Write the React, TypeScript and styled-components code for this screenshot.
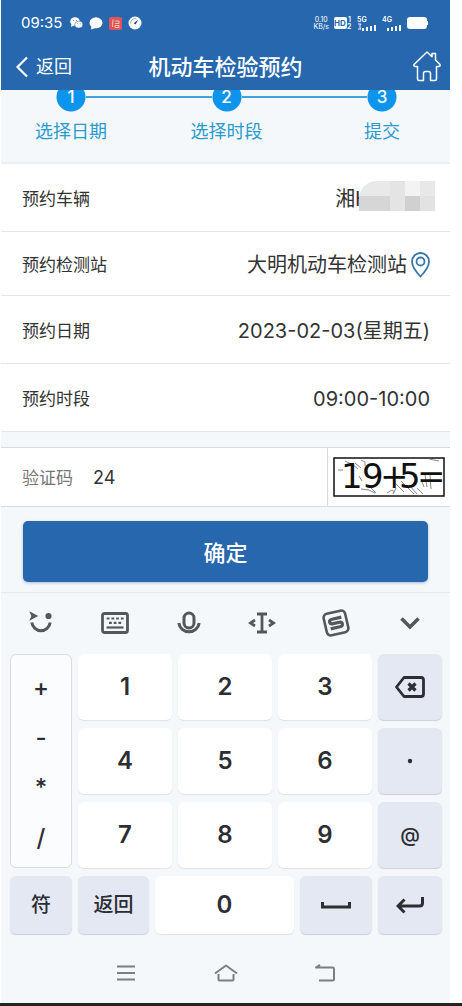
import React from 'react';
import styled, { createGlobalStyle } from 'styled-components';

const BLUE = '#2667ae';
const STEP = '#0d95ee';
const KEY_INK = '#2c2e33';

const GlobalStyle = createGlobalStyle`
  * { box-sizing: border-box; }
  body {
    margin: 0;
    background: #fff;
    font-family: Inter, "Noto Sans CJK SC", sans-serif;
    color: #333;
  }
  button, input { font: inherit; color: inherit; }
  button { border: 0; padding: 0; background: none; cursor: pointer; }
  svg { display: block; flex: none; }
`;

const Page = styled.div`
  padding: 0 12px 0 1px;
`;

const Phone = styled.div`
  background: #f5f8fa;
`;

const StatusBar = styled.div`
  height: 44px;
  padding: 2px 22px 0 20px;
  display: flex;
  align-items: center;
  justify-content: space-between;
  background: ${BLUE};
  color: #fff;
`;

const StatusGroup = styled.div<{ $gap: number }>`
  display: flex;
  align-items: center;
  gap: ${(p) => p.$gap}px;
`;

const Clock = styled.span`
  font-size: 15px;
  line-height: 20px;
  margin-right: 2px;
`;

const Speed = styled.span`
  font-size: 7px;
  line-height: 7px;
  text-align: center;
`;

const Header = styled.header`
  height: 46px;
  padding: 0 9px;
  display: grid;
  grid-template-columns: 1fr auto 1fr;
  align-items: center;
  background: ${BLUE};
  color: #fff;
`;

const BackButton = styled.button`
  justify-self: start;
  padding-left: 5px;
  display: flex;
  align-items: center;
  gap: 7px;
  font-size: 18px;
  line-height: 24px;
`;

const Title = styled.h1`
  margin: 0;
  font-size: 22px;
  line-height: 32px;
  font-weight: 500;
`;

const HomeLink = styled.a`
  justify-self: end;
  color: #fff;
`;

const StepsPanel = styled.nav`
  height: 74px;
  border-bottom: 2px solid #eceff1;
`;

const StepList = styled.ol`
  list-style: none;
  margin: 0;
  padding: 0 32px 0 34px;
  display: flex;
`;

const Step = styled.li`
  width: 72px;
  display: flex;
  flex-direction: column;
  align-items: center;
  gap: 7px;
  font-size: 18px;
  line-height: 26px;
  color: #2a9bcf;
`;

const StepNumber = styled.span`
  width: 30px;
  height: 22px;
  background: radial-gradient(circle at 50% 7px, ${STEP} 14px, transparent 15px);
  color: #fff;
  font-size: 17px;
  line-height: 14px;
  font-weight: 500;
  text-align: center;
`;

const Connector = styled.li`
  flex: 1;
  height: 2px;
  margin: 6px -21px 0;
  background: #3fa3e0;
`;

const Details = styled.dl`
  margin: 0;
  background: #fff;
`;

const DetailRow = styled.div<{ $compact?: boolean }>`
  height: ${(p) => (p.$compact ? 64 : 68)}px;
  padding: 2px 20px 0 21px;
  display: flex;
  align-items: center;
  justify-content: space-between;
  border-bottom: 1px solid #e4e5e7;
`;

const DetailName = styled.dt`
  font-size: 17px;
  line-height: 24px;
`;

const DetailValue = styled.dd`
  margin: 0;
  display: flex;
  align-items: center;
  gap: 4px;
  font-size: 20px;
  line-height: 28px;
`;

const Plate = styled.span`
  display: flex;
  align-items: center;
  margin-right: -5px;
  svg { margin-left: -11px; margin-top: -6px; }
`;

const CodeRow = styled.div`
  height: 60px;
  margin-top: 15px;
  padding-left: 21px;
  display: flex;
  align-items: center;
  background: #fff;
  border-top: 1px solid #d9dcde;
  border-bottom: 1px solid #d9dcde;
`;

const CodeLabel = styled.label`
  padding-top: 2px;
  font-size: 17px;
  line-height: 24px;
  color: #777;
`;

const CodeInput = styled.input`
  flex: 1;
  min-width: 0;
  margin-left: 20px;
  padding: 2px 0 0;
  border: 0;
  outline: 0;
  background: none;
  font-size: 18px;
  line-height: 24px;
`;

const CaptchaButton = styled.button`
  align-self: stretch;
  padding: 0 5px;
  border-left: 1px solid #d9dcde;
`;

const SubmitArea = styled.div`
  padding: 14px 22px 10px;
`;

const SubmitButton = styled.button`
  width: 100%;
  height: 61px;
  padding-top: 2px;
  border-radius: 5px;
  background: ${BLUE};
  box-shadow: 0 1px 3px rgba(38, 103, 174, 0.4);
  color: #fff;
  font-size: 22px;
  line-height: 32px;
  font-weight: 500;
`;

const Keyboard = styled.section`
  border-top: 1px solid #e6ebee;
`;

const Toolbar = styled.div`
  height: 61px;
  padding: 0 3px 2px;
  display: flex;
  color: #54585c;
`;

const ToolButton = styled.button`
  flex: 1;
  display: flex;
  align-items: center;
  justify-content: center;
`;

const Keys = styled.div`
  padding: 0 8px 0 9px;
  display: grid;
  grid-template-columns: 62fr 94fr 94fr 94fr 64fr;
  grid-template-rows: repeat(3, 66px);
  gap: 8px 6px;
`;

const BottomKeys = styled.div`
  padding: 8px 8px 0 9px;
  display: grid;
  grid-template-columns: 62fr 71fr 139fr 72fr 64fr;
  grid-template-rows: 58px;
  gap: 6px;
`;

const Key = styled.button<{ $tint?: boolean; $small?: boolean }>`
  display: flex;
  align-items: center;
  justify-content: center;
  min-width: 0;
  border-radius: 6px;
  background: ${(p) => (p.$tint ? '#e4e8f3' : '#fff')};
  box-shadow: 0 1px 1px ${(p) => (p.$tint ? '#cbd0dc' : '#dfe2e6')};
  color: ${KEY_INK};
  font-size: ${(p) => (p.$small ? 20 : 24)}px;
  line-height: 28px;
  font-weight: ${(p) => (p.$small ? 500 : 600)};
`;

const SymbolColumn = styled.div`
  grid-row: 1 / 4;
  padding: 8px 0 4px;
  display: flex;
  flex-direction: column;
  border: 1px solid #d9dce1;
  border-radius: 6px;
  background: #fbfcfe;
`;

const SymbolKey = styled.button`
  flex: 1;
  color: ${KEY_INK};
  font-size: 24px;
  line-height: 28px;
  font-weight: 500;
`;

const SystemNav = styled.nav`
  height: 69px;
  padding: 8px 75px 0;
  display: flex;
  color: #7b7e82;
`;

const Ground = styled.footer`
  height: 4px;
  margin: 0 -12px 0 -1px;
  background: #26251f;
`;

const Bars = () => (
  <g fill="#fff">
    <rect x="5" y="14" width="2" height="3" />
    <rect x="9" y="13" width="2" height="4" />
    <rect x="13" y="12" width="2" height="5" />
    <rect x="17" y="11" width="2" height="6" />
  </g>
);

const SignalText = styled.text`
  font-size: 7px;
  font-weight: 600;
  fill: #fff;
`;

const HdText = styled.text`
  font-size: 8px;
  font-weight: 700;
`;

const CaptchaText = styled.text`
  font-family: "DejaVu Sans", sans-serif;
  font-size: 34px;
  fill: #111;
`;

const StatusIcons = () => (
  <>
    <svg width="13" height="12" viewBox="0 0 13 12" fill="#fff">
      <ellipse cx="5" cy="4.5" rx="4.8" ry="4.2" />
      <path d="M1.5 7 1 10l3-1.6z" />
      <ellipse cx="8.8" cy="7.6" rx="4" ry="3.5" stroke={BLUE} strokeWidth=".5" />
      <g fill={BLUE}>
        <circle cx="3.4" cy="3.4" r=".5" /><circle cx="6.4" cy="3.4" r=".5" />
        <circle cx="7.6" cy="6.7" r=".4" /><circle cx="10.2" cy="6.7" r=".4" />
      </g>
    </svg>
    <svg width="14" height="13" viewBox="0 0 14 13" fill="#fff">
      <ellipse cx="7" cy="5.8" rx="6.5" ry="5.5" />
      <path d="M2.5 9 2 12.6 6.5 11z" />
    </svg>
    <svg width="13" height="13" viewBox="0 0 13 13">
      <rect width="13" height="13" rx="2" fill="#e0525c" />
      <path d="M4 2.500 3.500 10M6 4h4v2.500H6M6 8.500h4v2H6z" fill="none" stroke="#ffc9a0" />
    </svg>
    <svg width="14" height="14" viewBox="0 0 14 14">
      <circle cx="7" cy="7" r="6.500" fill="#fff" />
      <path d="M2.800 7.500A4.200 4.200 0 0 1 8.500 3" fill="none" stroke="#6d8fb5" strokeWidth=".8" />
      <path d="M5.800 7.200 10.200 3.800 7.600 8.600z" fill="#1f3a5c" />
    </svg>
  </>
);

const PlateMask = () => (
  <svg width="76" height="30" viewBox="0 0 76 30" aria-hidden="true">
    <path d="M0 15Q3 2 16 0H31V15z" fill="#e9e9e9" />
    <path d="M31 0h15v15H31z" fill="#e4e4e4" />
    <path d="M46 0h15v15H46z" fill="#f3f3f3" />
    <path d="M61 0h15v15H61z" fill="#e8e8e8" />
    <path d="M0 15h31v15H0z" fill="#d6d6d6" />
    <path d="M31 15h15v15H31z" fill="#e4e4e4" />
    <path d="M46 15h15v15H46z" fill="#d0d0d0" />
    <path d="M61 15h15v15H61z" fill="#e2e2e2" />
  </svg>
);

const Captcha = () => (
  <svg width="112" height="40" viewBox="0 0 112 40" role="img" aria-label="19+5=">
    <rect x="1" y="1" width="110" height="38" fill="#fff" stroke="#111" strokeWidth="1.500" />
    <g fill="none" stroke="#888" strokeWidth="1">
      <path d="M5 13h5M12 4l8 4 5 4M28 3l4 2v4M22 6l6 5M26 19l3 5M28 32l8 1 6 3M38 31l5 5M52 22l5-3" />
      <path d="M54 36l5-3 3 2M62 26l9 9M68 24l9 9 4 4M76 28l8 9M84 31l6 6M92 18l2 12M96 2l10 2M88 22l3 8M97 18l1 14M60 37l3-6M80 20l4-3" />
    </g>
    <CaptchaText y="31" x="8 29 47 66 84">19+5=</CaptchaText>
  </svg>
);

const tools = [
  {
    name: '表情',
    icon: (
      <svg width="24" height="24" viewBox="0 0 24 24" fill="none" stroke="currentColor" strokeWidth="3">
        <path d="M2.800 11.500A9.300 9.600 0 0 0 21.200 11.500" />
        <path d="M1.500 1.500 8 5 1.500 8.500l1.500-3.500z" fill="currentColor" strokeWidth="1.200" />
        <circle cx="19.500" cy="5" r="3.100" fill="currentColor" stroke="none" />
      </svg>
    ),
  },
  {
    name: '键盘',
    icon: (
      <svg width="28" height="22" viewBox="0 0 28 22" fill="none" stroke="currentColor" strokeWidth="2.200">
        <rect x="1.500" y="1.500" width="25" height="19" rx="2" strokeWidth="2.800" />
        <path d="M5.700 6.500h17" strokeDasharray="2.800 1.900" />
        <path d="M8 10.800h13" strokeDasharray="2.800 1.900" />
        <path d="M5.500 15.500h17" />
      </svg>
    ),
  },
  {
    name: '语音',
    icon: (
      <svg width="24" height="24" viewBox="0 0 24 24" fill="none" stroke="currentColor" strokeWidth="3">
        <rect x="7" y="2" width="10" height="15" rx="5" />
        <path d="M1.800 12A10.300 10.200 0 0 0 22.200 12" />
      </svg>
    ),
  },
  {
    name: '光标',
    icon: (
      <svg width="28" height="22" viewBox="0 0 28 22" fill="none" stroke="currentColor" strokeWidth="2.800">
        <path d="M9 2h10M9 20h10M14 2v18M7 8 2.500 11 7 14M21 8l4.500 3L21 14" />
      </svg>
    ),
  },
  {
    name: '输入法',
    icon: (
      <svg width="28" height="28" viewBox="0 0 28 28" fill="none" stroke="currentColor" strokeWidth="2.600">
        <g transform="rotate(-13 14 14)">
          <rect x="3" y="3" width="22" height="22" rx="4" />
          <path d="M20.500 9.500H11Q8 9.500 8 11.700T11 14h6.500Q20 14 20 16.300T17 18.500H7.500" strokeWidth="3.200" />
        </g>
      </svg>
    ),
  },
  {
    name: '收起',
    icon: (
      <svg width="20" height="14" viewBox="0 0 20 14" fill="none" stroke="currentColor" strokeWidth="3.600">
        <path d="M1.500 2.500 10 11 18.500 2.500" />
      </svg>
    ),
  },
];

const BackspaceIcon = () => (
  <svg width="30" height="22" viewBox="0 0 30 22" fill="none" stroke="currentColor" strokeWidth="2.800" strokeLinejoin="round">
    <path d="M9 1.500H26Q28.500 1.500 28.500 4V18Q28.500 20.500 26 20.500H9L1.500 11z" />
    <path d="M13.500 7.500l7 7M20.500 7.500l-7 7" strokeWidth="3.200" />
  </svg>
);

const SpaceIcon = () => (
  <svg width="30" height="8" viewBox="0 0 30 8" fill="none" stroke="currentColor" strokeWidth="3">
    <path d="M1.500 1V6H28.500V1" />
  </svg>
);

const EnterIcon = () => (
  <svg width="28" height="18" viewBox="0 0 28 18" fill="none" stroke="currentColor" strokeWidth="3">
    <path d="M26.500 1V7Q26.500 10 23.500 10H2M8.500 3.500 2 10l6.500 6.500" />
  </svg>
);

const DotIcon = () => (
  <svg width="6" height="6" viewBox="0 0 6 6" fill="currentColor">
    <circle cx="3" cy="3" r="2.200" />
  </svg>
);

export default function App() {
  return (
    <Page>
      <GlobalStyle />
      <Phone>
        <StatusBar>
          <StatusGroup $gap={6}>
            <Clock>09:35</Clock>
            <StatusIcons />
          </StatusGroup>
          <StatusGroup $gap={5}>
            <Speed>0.10<br />KB/s</Speed>
            <svg width="18" height="14" viewBox="0 0 18 14">
              <rect y="1" width="13" height="12" rx="2" fill="#fff" />
              <HdText x="0" y="10" fill={BLUE}>HD</HdText>
              <SignalText x="14" y="6">1</SignalText>
              <SignalText x="13" y="13">2</SignalText>
            </svg>
            <svg width="20" height="18" viewBox="0 0 20 18">
              <SignalText x="0" y="8">5G</SignalText>
              <path d="M1 10h3l-1 1.500v2l1 1.500H1" fill="none" stroke="#fff" />
              <Bars />
            </svg>
            <svg width="20" height="18" viewBox="0 0 20 18">
              <SignalText x="0" y="8">4G</SignalText>
              <Bars />
            </svg>
            <svg width="21" height="12" viewBox="0 0 21 12" fill="#fff">
              <rect width="20" height="12" rx="3" />
              <rect x="20" y="4" width="1" height="4" />
            </svg>
          </StatusGroup>
        </StatusBar>

        <Header>
          <BackButton>
            <svg width="14" height="22" viewBox="0 0 14 22" fill="none" stroke="#fff" strokeWidth="2.200">
              <path d="M12 1.500 2.500 11 12 20.500" />
            </svg>
            返回
          </BackButton>
          <Title>机动车检验预约</Title>
          <HomeLink href="#home" aria-label="首页">
            <svg width="28" height="32" viewBox="0 0 28 32" fill="none" stroke="currentColor" strokeWidth="1.500" strokeLinejoin="round">
              <path d="M14 1 1 13.500Q.5 15.500 2.500 15.500H4.500V28Q4.500 29.500 6 29.500H10.500V22.500Q10.500 20.500 12.500 20.500h3Q17.500 20.500 17.500 22.500v7H22Q23.500 29.500 23.500 28V15.500H25.500Q27.500 15.500 27 13.500L22.500 9V2.500H19V5.800z" />
            </svg>
          </HomeLink>
        </Header>

        <StepsPanel>
          <StepList>
            <Step><StepNumber>1</StepNumber>选择日期</Step>
            <Connector aria-hidden="true" />
            <Step><StepNumber>2</StepNumber>选择时段</Step>
            <Connector aria-hidden="true" />
            <Step><StepNumber>3</StepNumber>提交</Step>
          </StepList>
        </StepsPanel>

        <Details>
          <DetailRow>
            <DetailName>预约车辆</DetailName>
            <DetailValue><Plate>湘H<PlateMask /></Plate></DetailValue>
          </DetailRow>
          <DetailRow $compact>
            <DetailName>预约检测站</DetailName>
            <DetailValue>
              大明机动车检测站
              <svg width="19" height="26" viewBox="0 0 19 26" fill="none" stroke="#3a78ab" strokeWidth="1.800">
                <path d="M9.500 24.500Q1 15.500 1 9.500A8.500 8.500 0 0 1 18 9.500Q18 15.500 9.500 24.500z" />
                <circle cx="9.500" cy="9.500" r="4" />
              </svg>
            </DetailValue>
          </DetailRow>
          <DetailRow>
            <DetailName>预约日期</DetailName>
            <DetailValue>2023-02-03(星期五)</DetailValue>
          </DetailRow>
          <DetailRow>
            <DetailName>预约时段</DetailName>
            <DetailValue>09:00-10:00</DetailValue>
          </DetailRow>
        </Details>

        <CodeRow>
          <CodeLabel htmlFor="code">验证码</CodeLabel>
          <CodeInput id="code" inputMode="numeric" defaultValue="24" />
          <CaptchaButton><Captcha /></CaptchaButton>
        </CodeRow>

        <SubmitArea>
          <SubmitButton>确定</SubmitButton>
        </SubmitArea>

        <Keyboard>
          <Toolbar>
            {tools.map((tool) => (
              <ToolButton key={tool.name} aria-label={tool.name}>{tool.icon}</ToolButton>
            ))}
          </Toolbar>
          <Keys>
            <SymbolColumn>
              {['+', '-', '*', '/'].map((s) => <SymbolKey key={s}>{s}</SymbolKey>)}
            </SymbolColumn>
            <Key>1</Key>
            <Key>2</Key>
            <Key>3</Key>
            <Key $tint aria-label="删除"><BackspaceIcon /></Key>
            <Key>4</Key>
            <Key>5</Key>
            <Key>6</Key>
            <Key $tint aria-label="点"><DotIcon /></Key>
            <Key>7</Key>
            <Key>8</Key>
            <Key>9</Key>
            <Key $tint $small>@</Key>
          </Keys>
          <BottomKeys>
            <Key $tint $small>符</Key>
            <Key $tint $small>返回</Key>
            <Key>0</Key>
            <Key $tint aria-label="空格"><SpaceIcon /></Key>
            <Key $tint aria-label="换行"><EnterIcon /></Key>
          </BottomKeys>
        </Keyboard>

        <SystemNav>
          <ToolButton aria-label="菜单">
            <svg width="20" height="16" viewBox="0 0 20 16" stroke="currentColor" strokeWidth="2">
              <path d="M1 1.500h18M1 8h18M1 14.500h18" />
            </svg>
          </ToolButton>
          <ToolButton aria-label="主屏幕">
            <svg width="24" height="18" viewBox="0 0 24 18" fill="none" stroke="currentColor" strokeWidth="2" strokeLinejoin="round">
              <path d="M1 9.500 12 1.500 23 9.500M4.500 10V15.500Q4.500 16.500 5.500 16.500H18.500Q19.500 16.500 19.500 15.500V10" />
            </svg>
          </ToolButton>
          <ToolButton aria-label="返回上一级">
            <svg width="20" height="18" viewBox="0 0 20 18" fill="none" stroke="currentColor" strokeWidth="2" strokeLinejoin="round">
              <path d="M4 16.500H17.500Q19 16.500 19 15V5Q19 3.500 17.500 3.500H1L5 .8" />
            </svg>
          </ToolButton>
        </SystemNav>
      </Phone>
      <Ground />
    </Page>
  );
}
